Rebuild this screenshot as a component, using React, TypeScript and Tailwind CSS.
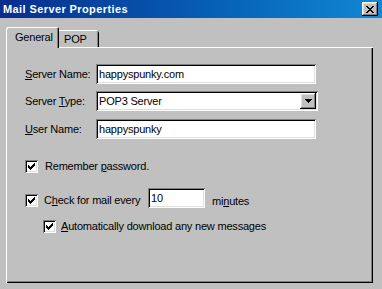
import React from "react";

const raised =
  "shadow-[inset_-1px_-1px_0_#000,inset_1px_1px_0_#fff,inset_-2px_-2px_0_#808080,inset_2px_2px_0_#dfdfdf]";
const sunken =
  "shadow-[inset_1px_1px_0_#808080,inset_-1px_-1px_0_#fff,inset_2px_2px_0_#000,inset_-2px_-2px_0_#dfdfdf]";

function Check() {
  return (
    <div className={`w-[13px] h-[13px] bg-white shrink-0 flex items-center justify-center ${sunken}`}>
      <svg width="7" height="7" viewBox="0 0 7 7" shapeRendering="crispEdges">
        <path
          d="M6 0h1v3h-1zM5 1h1v3h-1zM4 2h1v3h-1zM3 3h1v3h-1zM2 4h1v3h-1zM1 3h1v3h-1zM0 2h1v3h-1z"
          fill="#000"
        />
      </svg>
    </div>
  );
}

function Field({ children, w }: { children: React.ReactNode; w: string }) {
  return (
    <div className={`${w} h-[20px] bg-white flex items-center pl-[3px] ${sunken}`}>
      {children}
    </div>
  );
}

export default function App() {
  return (
    <div
      className="w-[382px] h-[289px] bg-[#c0c0c0] text-[11px] text-black leading-none overflow-hidden tracking-[-0.2px]"
      style={{ fontFamily: '"Liberation Sans", Arial, sans-serif' }}
    >
      {/* Title bar */}
      <div className="h-[18px] flex items-center pl-[3px] pr-[4px] bg-gradient-to-r from-[#0a2c8e] to-[#1288d4]">
        <span className="text-white font-bold text-[11px] tracking-[0.4px]">Mail Server Properties</span>
        <div className={`ml-auto w-[16px] h-[14px] bg-[#c0c0c0] flex items-center justify-center ${raised}`}>
          <svg width="8" height="7" viewBox="0 0 8 7" shapeRendering="crispEdges">
            <path
              d="M0 0h2v1h-2zM6 0h2v1h-2zM1 1h2v1h-2zM5 1h2v1h-2zM2 2h4v1h-4zM3 3h2v1h-2zM2 4h4v1h-4zM1 5h2v1h-2zM5 5h2v1h-2zM0 6h2v1h-2zM6 6h2v1h-2z"
              fill="#000"
            />
          </svg>
        </div>
      </div>

      <div className="pl-[6px] pt-[9px]">
        {/* Tabs */}
        <div className="flex items-end h-[20px]">
          <div className="relative z-10 -mb-px w-[53px] h-[21px] bg-[#c0c0c0] rounded-tl-[2px] rounded-tr-[2px] shadow-[inset_1px_1px_0_#fff,inset_-1px_0_0_#000,inset_-2px_0_0_#808080] flex items-start pt-[5px] pl-[9px]">
            General
          </div>
          <div className="w-[40px] h-[17px] bg-[#c0c0c0] rounded-tr-[2px] shadow-[inset_0_1px_0_#fff,inset_-1px_0_0_#000,inset_-2px_0_0_#808080] flex items-start pt-[4px] pl-[5px]">
            POP
          </div>
        </div>

        {/* Panel */}
        <div className="w-[367px] h-[236px] shadow-[inset_1px_1px_0_#fff,inset_-1px_-1px_0_#000,inset_-2px_-2px_0_#808080] pl-[19px] pt-[17px]">
          <div className="flex items-center">
            <span className="w-[71px]">
              <span className="underline">S</span>erver Name:
            </span>
            <Field w="w-[220px]">happyspunky.com</Field>
          </div>

          <div className="flex items-center mt-[7px]">
            <span className="w-[71px]">
              Server <span className="underline">T</span>ype:
            </span>
            <div className={`w-[222px] h-[20px] bg-white flex items-center pl-[3px] pr-[2px] ${sunken}`}>
              <span>POP3 Server</span>
              <div className={`ml-auto w-[16px] h-[16px] bg-[#c0c0c0] flex items-center justify-center ${raised}`}>
                <svg width="7" height="4" viewBox="0 0 7 4" shapeRendering="crispEdges">
                  <path d="M0 0h7v1h-7zM1 1h5v1h-5zM2 2h3v1h-3zM3 3h1v1h-1z" fill="#000" />
                </svg>
              </div>
            </div>
          </div>

          <div className="flex items-center mt-[8px]">
            <span className="w-[71px]">
              <span className="underline">U</span>ser Name:
            </span>
            <Field w="w-[220px]">happyspunky</Field>
          </div>

          <div className="flex items-center mt-[21px] h-[13px]">
            <Check />
            <span className="ml-[7px]">
              Remember <span className="underline">p</span>assword.
            </span>
          </div>

          <div className="flex items-start mt-[15px]">
            <div className="mt-[6px] flex items-center">
              <Check />
              <span className="ml-[6px] w-[104px]">
                C<span className="underline">h</span>eck for mail every
              </span>
            </div>
            <Field w="w-[57px]">10</Field>
            <span className="ml-[7px] mt-[8px]">
              mi<span className="underline">n</span>utes
            </span>
          </div>

          <div className="flex items-center mt-[12px] ml-[18px] h-[13px]">
            <Check />
            <span className="ml-[5px]">
              <span className="underline">A</span>utomatically download any new messages
            </span>
          </div>
        </div>
      </div>
    </div>
  );
}
